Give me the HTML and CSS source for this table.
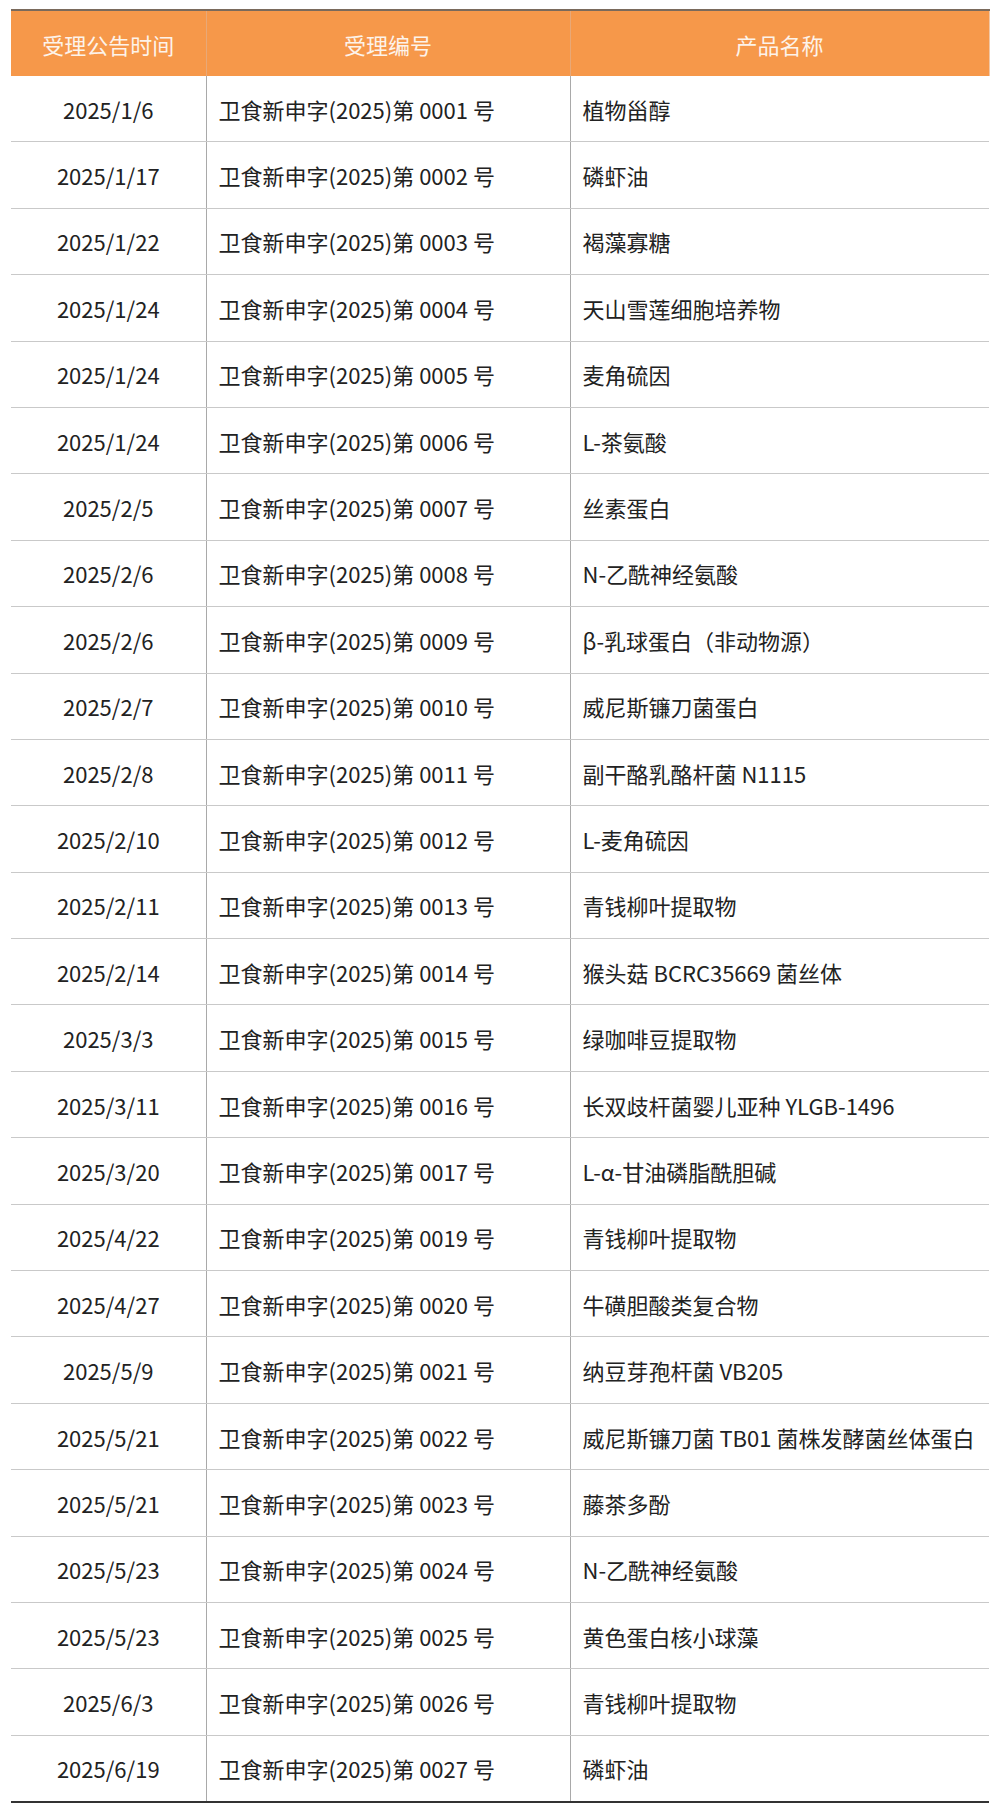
FILE: index.html
```html
<!DOCTYPE html>
<html lang="zh-CN">
<head>
<meta charset="utf-8">
<title>受理公告</title>
<link rel="stylesheet" href="styles.css">
</head>
<body>
<div class="page">
<table class="list">
<colgroup><col class="c1"><col class="c2"><col class="c3"></colgroup>
<thead>
<tr><th>受理公告时间</th><th>受理编号</th><th>产品名称</th></tr>
</thead>
<tbody>
<tr><td class="date">2025/1/6</td><td>卫食新申字(2025)第 0001 号</td><td>植物甾醇</td></tr>
<tr><td class="date">2025/1/17</td><td>卫食新申字(2025)第 0002 号</td><td>磷虾油</td></tr>
<tr><td class="date">2025/1/22</td><td>卫食新申字(2025)第 0003 号</td><td>褐藻寡糖</td></tr>
<tr><td class="date">2025/1/24</td><td>卫食新申字(2025)第 0004 号</td><td>天山雪莲细胞培养物</td></tr>
<tr><td class="date">2025/1/24</td><td>卫食新申字(2025)第 0005 号</td><td>麦角硫因</td></tr>
<tr><td class="date">2025/1/24</td><td>卫食新申字(2025)第 0006 号</td><td>L-茶氨酸</td></tr>
<tr><td class="date">2025/2/5</td><td>卫食新申字(2025)第 0007 号</td><td>丝素蛋白</td></tr>
<tr><td class="date">2025/2/6</td><td>卫食新申字(2025)第 0008 号</td><td>N-乙酰神经氨酸</td></tr>
<tr><td class="date">2025/2/6</td><td>卫食新申字(2025)第 0009 号</td><td>β-乳球蛋白（非动物源）</td></tr>
<tr><td class="date">2025/2/7</td><td>卫食新申字(2025)第 0010 号</td><td>威尼斯镰刀菌蛋白</td></tr>
<tr><td class="date">2025/2/8</td><td>卫食新申字(2025)第 0011 号</td><td>副干酪乳酪杆菌 N1115</td></tr>
<tr><td class="date">2025/2/10</td><td>卫食新申字(2025)第 0012 号</td><td>L-麦角硫因</td></tr>
<tr><td class="date">2025/2/11</td><td>卫食新申字(2025)第 0013 号</td><td>青钱柳叶提取物</td></tr>
<tr><td class="date">2025/2/14</td><td>卫食新申字(2025)第 0014 号</td><td>猴头菇 BCRC35669 菌丝体</td></tr>
<tr><td class="date">2025/3/3</td><td>卫食新申字(2025)第 0015 号</td><td>绿咖啡豆提取物</td></tr>
<tr><td class="date">2025/3/11</td><td>卫食新申字(2025)第 0016 号</td><td>长双歧杆菌婴儿亚种 YLGB-1496</td></tr>
<tr><td class="date">2025/3/20</td><td>卫食新申字(2025)第 0017 号</td><td>L-α-甘油磷脂酰胆碱</td></tr>
<tr><td class="date">2025/4/22</td><td>卫食新申字(2025)第 0019 号</td><td>青钱柳叶提取物</td></tr>
<tr><td class="date">2025/4/27</td><td>卫食新申字(2025)第 0020 号</td><td>牛磺胆酸类复合物</td></tr>
<tr><td class="date">2025/5/9</td><td>卫食新申字(2025)第 0021 号</td><td>纳豆芽孢杆菌 VB205</td></tr>
<tr><td class="date">2025/5/21</td><td>卫食新申字(2025)第 0022 号</td><td>威尼斯镰刀菌 TB01 菌株发酵菌丝体蛋白</td></tr>
<tr><td class="date">2025/5/21</td><td>卫食新申字(2025)第 0023 号</td><td>藤茶多酚</td></tr>
<tr><td class="date">2025/5/23</td><td>卫食新申字(2025)第 0024 号</td><td>N-乙酰神经氨酸</td></tr>
<tr><td class="date">2025/5/23</td><td>卫食新申字(2025)第 0025 号</td><td>黄色蛋白核小球藻</td></tr>
<tr><td class="date">2025/6/3</td><td>卫食新申字(2025)第 0026 号</td><td>青钱柳叶提取物</td></tr>
<tr><td class="date">2025/6/19</td><td>卫食新申字(2025)第 0027 号</td><td>磷虾油</td></tr>
</tbody>
</table>
</div>
</body>
</html>
```

FILE: styles.css
```css
html, body {
  margin: 0;
  padding: 0;
  background: #ffffff;
}

.page {
  padding: 9px 11px 0 11px;
}

.list {
  width: 978px;
  border-collapse: collapse;
  table-layout: fixed;
  font-family: "Noto Sans CJK SC", "Noto Sans", sans-serif;
  font-size: 22px;
  color: #222222;
  border-top: 2px solid #7a6a5c;
  border-bottom: 2px solid #333333;
}

.c1 { width: 195px; }
.c2 { width: 364px; }
.c3 { width: 419px; }

.list th {
  background: #f6984a;
  color: #fdf3ea;
  font-weight: 400;
  height: 65px;
  padding: 0 12px;
  text-align: center;
  border-left: 1px solid #e8a877;
  border-right: 1px solid #e8a877;
}

.list th:first-child { border-left: none; }
.list th:last-child { border-right: 1px solid #f1c7a6; }

.list td {
  height: 65.4px;
  padding: 0 12px;
  text-align: left;
  white-space: nowrap;
  border-bottom: 1px solid #c9c9c9;
  border-left: 1px solid #a9a9a9;
  border-right: 1px solid #a9a9a9;
}

.list td:first-child { border-left: none; }
.list td:last-child { border-right: none; }

.list tbody tr:last-child td { border-bottom: 2px solid #333333; }

.list td.date {
  text-align: center;
}
```
